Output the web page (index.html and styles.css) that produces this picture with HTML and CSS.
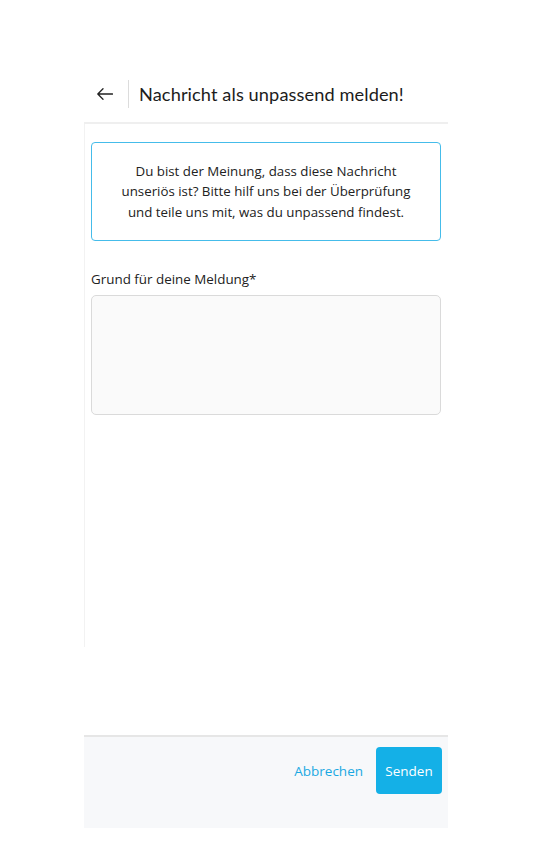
FILE: index.html
```html
<!DOCTYPE html>
<html lang="de">
<head>
<meta charset="utf-8">
<title>Nachricht melden</title>
<link rel="stylesheet" href="styles.css">
</head>
<body>
<div class="panel">
  <header class="header">
    <div class="header-row">
      <button class="back" aria-label="Zurück">
        <svg width="16" height="12" viewBox="0 0 16 12" fill="none" stroke="#222" stroke-width="1.3" stroke-linecap="round" stroke-linejoin="round"><path d="M15.5 6H1M6 0.8L0.8 6L6 11.2"/></svg>
      </button>
      <span class="sep"></span>
      <h1 class="title">Nachricht als unpassend melden!</h1>
    </div>
  </header>
  <main class="content">
    <div class="info">Du bist der Meinung, dass diese Nachricht unseriös ist? Bitte hilf uns bei der Überprüfung und teile uns mit, was du unpassend findest.</div>
    <label class="label" for="grund">Grund für deine Meldung*</label>
    <textarea id="grund" class="field"></textarea>
  </main>
  <div class="spacer"></div>
  <footer class="footer">
    <button class="cancel">Abbrechen</button>
    <button class="send">Senden</button>
  </footer>
</div>
</body>
</html>
```
FILE: styles.css
```css
html, body {
  margin: 0;
  padding: 0;
  background: #ffffff;
}
body {
  font-family: "Open Sans", "Noto Sans", sans-serif;
  color: #333;
}
.panel {
  margin-left: 84px;
  width: 364px;
  display: flex;
  flex-direction: column;
}
.header {
  height: 122px;
  border-bottom: 2px solid #efefef;
  display: flex;
  align-items: flex-end;
  box-sizing: content-box;
}
.header-row {
  display: flex;
  align-items: center;
  height: 28px;
  margin-bottom: 14px;
  padding-left: 13px;
}
.back {
  border: 0;
  background: none;
  padding: 0;
  width: 16px;
  height: 12px;
  display: flex;
  cursor: pointer;
}
.sep {
  width: 1px;
  height: 28px;
  background: #dcdcdc;
  margin-left: 15px;
  margin-right: 10px;
}
.title {
  margin: 0;
  font-family: "Lato", "Noto Sans", sans-serif;
  font-weight: 400;
  font-size: 18.2px;
  color: #1c1c1c;
  letter-spacing: 0.1px;
}
.content {
  height: 523px;
  border-left: 1px solid #f2f2f2;
  padding: 18px 7px 0 6px;
  box-sizing: border-box;
  display: flex;
  flex-direction: column;
}
.info {
  border: 1.5px solid #45bcea;
  border-radius: 4px;
  height: 99px;
  box-sizing: border-box;
  display: flex;
  align-items: center;
  justify-content: center;
  text-align: center;
  padding: 0 20px;
  font-size: 13.3px;
  line-height: 20.5px;
  color: #222;
}
.label {
  margin-top: 28px;
  font-size: 13.4px;
  line-height: 20px;
  color: #222;
}
.field {
  margin-top: 6px;
  height: 120px;
  box-sizing: border-box;
  background: #fafafa;
  border: 1.5px solid #dadada;
  border-radius: 5px;
  resize: none;
  font-family: inherit;
}
.spacer {
  height: 88px;
}
.footer {
  border-top: 2px solid #e6e6e6;
  background: #f7f8fa;
  height: 81px;
  display: flex;
  justify-content: flex-end;
  align-items: flex-start;
  padding: 10px 6px 0 0;
  box-sizing: content-box;
}
.cancel {
  border: 0;
  background: none;
  font-family: inherit;
  font-size: 13.5px;
  color: #1aa8e2;
  height: 47px;
  padding: 0;
  margin-right: 13px;
  cursor: pointer;
}
.send {
  border: 0;
  background: #14b0e7;
  color: #fff;
  font-family: inherit;
  font-size: 13.5px;
  width: 66px;
  height: 47px;
  border-radius: 4px;
  cursor: pointer;
}
```
